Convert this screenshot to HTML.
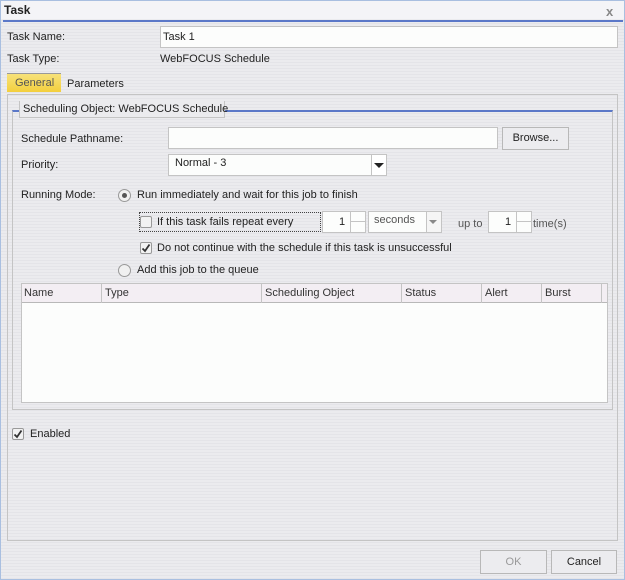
<!DOCTYPE html>
<html><head><meta charset="utf-8"><style>
*{box-sizing:border-box;margin:0;padding:0}
body{width:625px;height:580px;overflow:hidden;font-family:"Liberation Sans",Tahoma,sans-serif;font-size:11px;color:#222;
background:repeating-linear-gradient(#ebebee 0,#ebebee 2px,#e4e4e8 2px,#e4e4e8 3px);}
.a{position:absolute;white-space:nowrap}
.win{position:absolute;left:0;top:0;width:625px;height:580px;border:1px solid #a9bfe0}
.inp{position:absolute;background:#fcfdfc;border:1px solid #c4c4c4}
.btn{position:absolute;border:1px solid #b8b8b8;background:#ececef;text-align:center}
.cb{position:absolute;width:12px;height:12px;border:1px solid #999;background:#f2f2f2;border-radius:2px}
.rd{position:absolute;width:13px;height:13px;border:1px solid #999;background:#f0f0f0;border-radius:50%}
.ck{position:absolute;width:12px;height:12px}
</style></head><body>
<div class="win"></div>
<div class="a" style="left:1px;top:1px;width:623px;height:18px;background:#f4f4f7"></div>
<div class="a" style="left:4px;top:3px;font-weight:bold;font-size:12px">Task</div>
<div class="a" style="left:606px;top:4px;color:#888;font-size:13px;font-weight:bold">x</div>
<div class="a" style="left:3px;top:20px;width:620px;height:2px;background:#5b78c8"></div>

<div class="a" style="left:7px;top:31px">Task Name:</div>
<div class="inp" style="left:160px;top:26px;width:458px;height:22px"></div>
<div class="a" style="left:163px;top:31px">Task 1</div>
<div class="a" style="left:7px;top:53px">Task Type:</div>
<div class="a" style="left:160px;top:53px">WebFOCUS Schedule</div>

<div class="a" style="left:7px;top:73px;width:54px;height:19px;background:linear-gradient(#f7e27a,#f3cf3d);border-top:1px solid #999"></div>
<div class="a" style="left:15px;top:77px;color:#555">General</div>
<div class="a" style="left:67px;top:78px">Parameters</div>

<div class="a" style="left:7px;top:94px;width:611px;height:447px;border:1px solid #c4c4c4"></div>
<div class="a" style="left:12px;top:110px;width:601px;height:300px;border:1px solid #c4c4c4;border-top:2px solid #5b78c8"></div>
<div class="a" style="left:19px;top:101px;width:206px;height:17px;background:#ebebee;border:1px solid #c4c4c4;border-top:none"></div>
<div class="a" style="left:23px;top:103px">Scheduling Object: WebFOCUS Schedule</div>

<div class="a" style="left:21px;top:133px">Schedule Pathname:</div>
<div class="inp" style="left:168px;top:127px;width:330px;height:22px"></div>
<div class="btn" style="left:502px;top:127px;width:67px;height:23px;line-height:21px">Browse...</div>

<div class="a" style="left:21px;top:159px">Priority:</div>
<div class="inp" style="left:168px;top:154px;width:219px;height:22px"></div>
<div class="a" style="left:175px;top:157px">Normal - 3</div>
<div class="a" style="left:371px;top:155px;width:15px;height:20px;border-left:1px solid #c4c4c4;background:#fff"></div>
<div class="a" style="left:374px;top:163px;width:0;height:0;border-left:5px solid transparent;border-right:5px solid transparent;border-top:5px solid #222"></div>

<div class="a" style="left:21px;top:189px">Running Mode:</div>
<div class="rd" style="left:118px;top:189px"></div>
<div class="a" style="left:122px;top:193px;width:5px;height:5px;border-radius:50%;background:#555"></div>
<div class="a" style="left:137px;top:189px">Run immediately and wait for this job to finish</div>

<div class="a" style="left:139px;top:212px;width:182px;height:20px;border:1px dotted #444"></div>
<div class="cb" style="left:140px;top:216px"></div>
<div class="a" style="left:157px;top:216px">If this task fails repeat every</div>
<div class="inp" style="left:322px;top:211px;width:44px;height:22px"></div>
<div class="a" style="left:339px;top:216px">1</div>
<div class="a" style="left:350px;top:212px;width:16px;height:20px;border-left:1px solid #c4c4c4"></div>
<div class="a" style="left:350px;top:221px;width:16px;height:1px;background:#c4c4c4"></div>
<div class="inp" style="left:368px;top:211px;width:74px;height:22px"></div>
<div class="a" style="left:374px;top:214px;color:#555">seconds</div>
<div class="a" style="left:426px;top:212px;width:15px;height:20px;border-left:1px solid #c4c4c4;background:#f5f5f5"></div>
<div class="a" style="left:429px;top:220px;border-left:4px solid transparent;border-right:4px solid transparent;border-top:4px solid #888"></div>
<div class="a" style="left:458px;top:218px;color:#555">up to</div>
<div class="inp" style="left:488px;top:211px;width:44px;height:22px"></div>
<div class="a" style="left:505px;top:216px">1</div>
<div class="a" style="left:516px;top:212px;width:16px;height:20px;border-left:1px solid #c4c4c4"></div>
<div class="a" style="left:516px;top:221px;width:16px;height:1px;background:#c4c4c4"></div>
<div class="a" style="left:533px;top:218px;color:#555">time(s)</div>

<div class="cb" style="left:140px;top:242px"></div>
<svg class="ck" style="left:140px;top:242px" viewBox="0 0 12 12"><path d="M2.5 6.5 L5 9 L9.5 2.5" fill="none" stroke="#333" stroke-width="1.8"/></svg>
<div class="a" style="left:157px;top:242px">Do not continue with the schedule if this task is unsuccessful</div>

<div class="rd" style="left:118px;top:264px"></div>
<div class="a" style="left:137px;top:264px">Add this job to the queue</div>

<div class="a" style="left:21px;top:283px;width:587px;height:120px;background:#fcfdfc;border:1px solid #c4c4c4"></div>
<div class="a" style="left:22px;top:284px;width:585px;height:19px;background:#f3eef3;border-bottom:1px solid #b8b8b8"></div>
<div class="a" style="left:24px;top:287px;color:#333">Name</div>
<div class="a" style="left:101px;top:284px;width:1px;height:19px;background:#c4c4c4"></div>
<div class="a" style="left:105px;top:287px;color:#333">Type</div>
<div class="a" style="left:261px;top:284px;width:1px;height:19px;background:#c4c4c4"></div>
<div class="a" style="left:265px;top:287px;color:#333">Scheduling Object</div>
<div class="a" style="left:401px;top:284px;width:1px;height:19px;background:#c4c4c4"></div>
<div class="a" style="left:405px;top:287px;color:#333">Status</div>
<div class="a" style="left:481px;top:284px;width:1px;height:19px;background:#c4c4c4"></div>
<div class="a" style="left:485px;top:287px;color:#333">Alert</div>
<div class="a" style="left:541px;top:284px;width:1px;height:19px;background:#c4c4c4"></div>
<div class="a" style="left:545px;top:287px;color:#333">Burst</div>
<div class="a" style="left:601px;top:284px;width:1px;height:19px;background:#c4c4c4"></div>

<div class="cb" style="left:12px;top:428px"></div>
<svg class="ck" style="left:12px;top:428px" viewBox="0 0 12 12"><path d="M2.5 6.5 L5 9 L9.5 2.5" fill="none" stroke="#333" stroke-width="1.8"/></svg>
<div class="a" style="left:30px;top:428px">Enabled</div>

<div class="btn" style="left:480px;top:550px;width:67px;height:24px;line-height:22px;color:#999">OK</div>
<div class="btn" style="left:551px;top:550px;width:66px;height:24px;line-height:22px">Cancel</div>
</body></html>
